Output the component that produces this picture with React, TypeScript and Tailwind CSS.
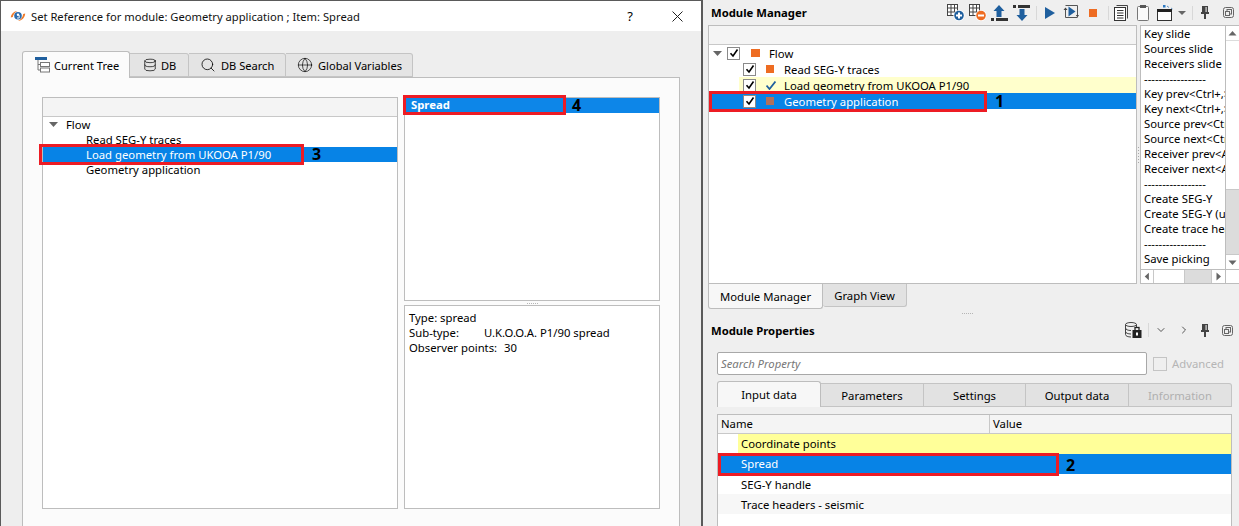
import React from 'react';
import { Database, Search, Globe, ChevronDown, ChevronRight } from 'lucide-react';

const Check = ({ className = '' }: { className?: string }) => (
  <svg width="10" height="10" viewBox="0 0 10 10" className={className}>
    <path d="M1.5 5.2 L4 8 L8.5 1.5" fill="none" stroke="#000" strokeWidth="1.6" />
  </svg>
);

const CheckBox = () => (
  <div className="w-[13px] h-[13px] border border-[#8a8a8a] bg-white flex items-center justify-center shrink-0">
    <Check />
  </div>
);

const Caret = () => (
  <svg width="9" height="5" viewBox="0 0 9 5" className="shrink-0">
    <path d="M0 0 H9 L4.5 5 Z" fill="#666" />
  </svg>
);

const Logo = () => (
  <svg width="16" height="12" viewBox="0 0 16 12" className="shrink-0">
    <path d="M0.8 7.5 C1 4 4 1.2 7.5 1 C5 2.2 3.2 4.5 2.8 7 Z" fill="#ee7a2a" />
    <path d="M15.2 3.5 C15 7.5 12 10.8 8 11 C10.8 9.8 12.8 7.2 13.2 4 Z" fill="#ee7a2a" />
    <circle cx="8" cy="5.8" r="3.8" fill="#2b6cae" />
    <circle cx="8" cy="4.8" r="1.2" fill="#fff" />
    <path d="M9.2 5 V8 H7" fill="none" stroke="#fff" strokeWidth="0.9" />
  </svg>
);

const TreeIcon = () => (
  <svg width="16" height="16" viewBox="0 0 16 16" className="shrink-0">
    <rect x="0" y="0" width="12" height="3" fill="#1f5f9e" />
    <path d="M3 3 V13 H5 M3 7.5 H5" fill="none" stroke="#777" />
    <rect x="5.5" y="5.5" width="9" height="4" fill="#fff" stroke="#777" />
    <rect x="5.5" y="11" width="9" height="4" fill="#fff" stroke="#777" />
  </svg>
);

const GridIcon = ({ sign }: { sign: 'plus' | 'minus' }) => (
  <svg width="18" height="17" viewBox="0 0 18 17" className="shrink-0">
    <rect x="0.5" y="0.5" width="10" height="11" fill="#fff" stroke="#444" />
    <path d="M0.5 4 H10.5 M0.5 8 H10.5 M4 0.5 V11.5 M7.5 0.5 V11.5" stroke="#444" />
    <circle cx="12" cy="11.5" r="5.5" fill="#fff" />
    <circle cx="12" cy="11.5" r="4.8" fill={sign === 'plus' ? '#1f5f9e' : '#ee6c22'} />
    <path d={sign === 'plus' ? 'M9 11.5 H15 M12 8.5 V14.5' : 'M9 11.5 H15'} stroke="#fff" strokeWidth="2" />
  </svg>
);

const UpIcon = () => (
  <svg width="17" height="16" viewBox="0 0 17 16" className="shrink-0">
    <path d="M8 0 L13.5 6 H10.5 V12 H5.5 V6 H2.5 Z" fill="#1f5f9e" />
    <rect x="0" y="13" width="3" height="3" fill="#333" />
    <rect x="5" y="13" width="12" height="3" fill="#333" />
  </svg>
);

const DownIcon = () => (
  <svg width="17" height="16" viewBox="0 0 17 16" className="shrink-0">
    <rect x="0" y="0" width="3" height="3" fill="#333" />
    <rect x="5" y="0" width="12" height="3" fill="#333" />
    <path d="M9 16 L14.5 10 H11.5 V4 H6.5 V10 H3.5 Z" fill="#1f5f9e" />
  </svg>
);

const PlayIcon = () => (
  <svg width="10" height="12" viewBox="0 0 10 12" className="shrink-0">
    <path d="M0 0 L10 6 L0 12 Z" fill="#1f5f9e" />
  </svg>
);

const StepIcon = () => (
  <svg width="16" height="15" viewBox="0 0 16 15" className="shrink-0">
    <path d="M2.5 0.5 H14.5 V10 M14.5 12.5 H2.5 V5" fill="none" stroke="#555" />
    <path d="M5.5 1.5 L12.5 6.5 L5.5 11.5 Z" fill="#1f5f9e" />
    <path d="M0.5 5 L2.5 2.5 L4.5 5 Z" fill="#444" />
    <path d="M12.8 10 L14.5 12.5 L16 10 Z" fill="#444" />
  </svg>
);

const StopIcon = () => <div className="w-[8px] h-[8px] bg-[#ee6c22] shrink-0" />;

const DocIcon = () => (
  <svg width="14" height="16" viewBox="0 0 14 16" className="shrink-0">
    <path d="M2.5 0.5 H13.5 V13.5" fill="none" stroke="#444" />
    <rect x="0.5" y="2.5" width="11" height="13" fill="#fff" stroke="#333" />
    <path d="M3 5.5 H9.5 M3 8 H9.5 M3 10.5 H9.5 M3 13 H9.5" stroke="#333" />
  </svg>
);

const ClipIcon = () => (
  <svg width="12" height="16" viewBox="0 0 12 16" className="shrink-0">
    <rect x="0.5" y="1.5" width="11" height="14" rx="1" fill="#fafafa" stroke="#777" />
    <rect x="3" y="0" width="6" height="3" fill="#555" />
  </svg>
);

const WindowIcon = () => (
  <svg width="16" height="16" viewBox="0 0 16 16" className="shrink-0">
    <rect x="6" y="0" width="2.5" height="2.5" fill="#2b78c2" />
    <path d="M10 1 L12 2.5 M14 3 L15.5 4" stroke="#5b8fc2" />
    <rect x="0.5" y="4.5" width="14" height="11" fill="#fff" stroke="#333" />
    <rect x="0" y="4" width="15" height="3" fill="#222" />
  </svg>
);

const PinIcon = () => (
  <svg width="8" height="13" viewBox="0 0 8 13" className="shrink-0">
    <path d="M1 0 H7 V6 H8 V8 H5 V13 H3 V8 H0 V6 H1 Z" fill="#444" />
    <rect x="4.5" y="1" width="1.2" height="5" fill="#ddd" />
  </svg>
);

const RestoreIcon = () => (
  <svg width="11" height="11" viewBox="0 0 11 11" className="shrink-0">
    <rect x="0.5" y="0.5" width="10" height="10" rx="2" fill="none" stroke="#666" />
    <rect x="4" y="2.5" width="4.5" height="4.5" fill="none" stroke="#666" />
    <rect x="2.5" y="4.5" width="4" height="4" fill="#eee" stroke="#666" />
  </svg>
);

const DbLockIcon = () => (
  <svg width="17" height="16" viewBox="0 0 17 16" className="shrink-0">
    <ellipse cx="6" cy="2.5" rx="5.5" ry="2" fill="none" stroke="#444" />
    <path d="M0.5 2.5 V12.5 C0.5 14 3 15 6 15 M0.5 6 C0.5 7.5 3 8.5 6 8.5 M0.5 9.5 C0.5 11 3 12 6 12 M11.5 2.5 V6" fill="none" stroke="#444" />
    <rect x="7.5" y="8" width="9" height="8" fill="#222" />
    <rect x="10" y="5.5" width="4" height="4" fill="none" stroke="#222" strokeWidth="1.3" />
    <rect x="11" y="10.5" width="2" height="3" fill="#fff" />
  </svg>
);

const Sep = () => <div className="w-px h-[14px] bg-[#d8d8d8] shrink-0" />;

// vertical or horizontal grip dots of a splitter
const GripH = () => (
  <div className="flex gap-px">
    {[0, 1, 2, 3, 4, 5].map((i) => (
      <span key={i} className="w-px h-px bg-[#b5b5b5]" />
    ))}
  </div>
);
const GripV = () => (
  <div className="flex flex-col gap-[2px]">
    {[0, 1, 2, 3, 4, 5].map((i) => (
      <span key={i} className="w-px h-px bg-[#a8a8a8]" />
    ))}
  </div>
);

const ScrollArrow = ({ d }: { d: string }) => (
  <svg width="13" height="13" viewBox="0 0 13 13">
    <path d={d} fill="#666" />
  </svg>
);

const menuLines = [
  'Key slide', 'Sources slide', 'Receivers slide', '-----------------',
  'Key prev<Ctrl+,>', 'Key next<Ctrl+,>', 'Source prev<Ctrl+Up>', 'Source next<Ctrl+Down>',
  'Receiver prev<Alt+Left>', 'Receiver next<Alt+Right>', '-----------------',
  'Create SEG-Y', 'Create SEG-Y (using headers)', 'Create trace headers', '-----------------', 'Save picking',
];

export default function App() {
  return (
    <div className="relative w-[1239px] h-[526px] overflow-hidden flex bg-[#efefef] text-[11.3px] leading-[15px] text-black font-['Noto_Sans',sans-serif]">
      {/* Dialog */}
      <div className="w-[703px] h-full shrink-0 flex flex-col border-t border-l border-r-2 border-[#5a5a5a] bg-[#eeeeee]">
        <div className="h-[30px] shrink-0 bg-white flex items-center pl-[9px]">
          <Logo />
          <span className="ml-[5px] text-[11.2px] text-[#111]">Set Reference for module: Geometry application ; Item: Spread</span>
          <span className="ml-auto text-[13px]">?</span>
          <svg width="11" height="11" viewBox="0 0 11 11" className="ml-[39px] mr-[18px]">
            <path d="M0.5 0.5 L10.5 10.5 M10.5 0.5 L0.5 10.5" stroke="#222" />
          </svg>
        </div>

        <div className="flex-1 pt-[20px] pl-[21px] min-h-0">
          <div className="flex h-[26px] items-end text-[11.1px]">
            <div className="w-[108px] h-[27px] -mb-px z-10 flex items-center gap-[3px] pl-[12px] bg-[#fbfbfb] border border-b-0 border-[#bdbdbd] rounded-t-[3px]">
              <TreeIcon />
              <span>Current Tree</span>
            </div>
            <div className="w-[59px] h-[24px] flex items-center gap-[4px] pl-[13px] bg-[#e4e4e4] border border-l-0 border-[#c4c4c4] rounded-tr-[3px]">
              <Database size={14} strokeWidth={1.2} />
              <span>DB</span>
            </div>
            <div className="w-[97px] h-[24px] flex items-center gap-[5px] pl-[11px] bg-[#e4e4e4] border border-l-0 border-[#c4c4c4] rounded-tr-[3px]">
              <Search size={16} strokeWidth={1.2} />
              <span>DB Search</span>
            </div>
            <div className="w-[127px] h-[24px] flex items-center gap-[5px] pl-[11px] bg-[#e4e4e4] border border-l-0 border-[#c4c4c4] rounded-tr-[3px]">
              <Globe size={16} strokeWidth={1} />
              <span>Global Variables</span>
            </div>
          </div>

          <div className="w-[658px] h-[460px] border border-[#bdbdbd] bg-[#fbfbfb] pt-[19px] pl-[19px] flex gap-[6px]">
            <div className="relative w-[356px] h-[412px] border border-[#bdbdbd] bg-white shrink-0">
              <div className="h-[19px] bg-[#f4f4f4] border-b border-[#c8c8c8]" />
              <div className="flex items-center h-[15px] pl-[6px] gap-[8px]">
                <Caret />
                <span>Flow</span>
              </div>
              <div className="h-[15px] pl-[43px]">Read SEG-Y traces</div>
              <div className="h-[15px] pl-[43px] bg-[#0783e6] text-white">Load geometry from UKOOA P1/90</div>
              <div className="h-[15px] pl-[43px]">Geometry application</div>
              {/* annotation 3 */}
              <div className="absolute left-[-4px] top-[46px] w-[265px] h-[21px] border-[3px] border-[#ed1c24]" />
              <div className="absolute left-[269px] top-[47px] text-[16px] leading-[18px] font-bold">3</div>
            </div>

            <div className="w-[256px] h-[412px] shrink-0 flex flex-col">
              <div className="relative h-[204px] border border-[#bdbdbd] bg-white shrink-0">
                <div className="h-[15px] pl-[6px] leading-[14px] bg-[#0d86e8] text-white font-bold">Spread</div>
                <div className="absolute left-[-2px] top-[-3px] w-[163px] h-[20px] border-[3px] border-[#ed1c24]" />
                <div className="absolute left-[167px] top-[-2px] text-[16px] leading-[18px] font-bold">4</div>
              </div>
              <div className="h-[4px] flex items-center justify-center shrink-0">
                <GripH />
              </div>
              <div className="flex-1 border border-[#bdbdbd] bg-white pl-[4px] pt-[4px]">
                <div>Type: spread</div>
                <div className="flex">
                  <span className="w-[75px]">Sub-type:</span>
                  <span>U.K.O.O.A. P1/90 spread</span>
                </div>
                <div className="flex">
                  <span className="w-[95px]">Observer points:</span>
                  <span>30</span>
                </div>
              </div>
            </div>
          </div>
        </div>
      </div>

      {/* Right column */}
      <div className="flex-1 min-w-0 flex flex-col">
        <div className="h-[25px] shrink-0 flex items-center pl-[8px] pr-[5px]">
          <span className="font-bold whitespace-nowrap">Module Manager</span>
          <div className="ml-auto flex items-center">
            <GridIcon sign="plus" />
            <div className="ml-[4px]"><GridIcon sign="minus" /></div>
            <div className="ml-[4px]"><UpIcon /></div>
            <div className="ml-[5px]"><DownIcon /></div>
            <div className="ml-[6px]"><Sep /></div>
            <div className="ml-[8px]"><PlayIcon /></div>
            <div className="ml-[8px]"><StepIcon /></div>
            <div className="ml-[10px]"><StopIcon /></div>
            <div className="ml-[11px]"><Sep /></div>
            <div className="ml-[5px]"><DocIcon /></div>
            <div className="ml-[9px]"><ClipIcon /></div>
            <div className="ml-[8px]"><WindowIcon /></div>
            <div className="ml-[5px]"><svg width="8" height="4" viewBox="0 0 8 4"><path d="M0 0 H8 L4 4 Z" fill="#666" /></svg></div>
            <div className="ml-[6px]"><Sep /></div>
            <div className="ml-[8px]"><PinIcon /></div>
            <div className="ml-[14px]"><RestoreIcon /></div>
          </div>
        </div>

        <div className="flex h-[259px] shrink-0 pl-[5px]">
          <div className="relative w-[429px] border border-[#bdbdbd] bg-white shrink-0">
            <div className="h-[19px] bg-[#f4f4f4] border-b border-[#c8c8c8]" />
            <div className="flex items-center h-[16px] pl-[4px]">
              <Caret />
              <div className="ml-[5px]"><CheckBox /></div>
              <div className="ml-[11px] w-[9px] h-[8px] bg-[#ee6c22]" />
              <span className="ml-[9px]">Flow</span>
            </div>
            <div className="flex items-center h-[16px] pl-[34px]">
              <CheckBox />
              <div className="ml-[10px] w-[8px] h-[8px] bg-[#ee6c22]" />
              <span className="ml-[10px]">Read SEG-Y traces</span>
            </div>
            <div className="flex items-center h-[16px] pl-[34px] bg-[linear-gradient(to_right,#fff_0,#fff_30px,#ffffcc_30px)]">
              <CheckBox />
              <svg width="10" height="9" viewBox="0 0 10 9" className="ml-[10px]">
                <path d="M0.5 4.5 L3.5 8 L9.5 0.5" fill="none" stroke="#1f5f9e" strokeWidth="1.8" />
              </svg>
              <span className="ml-[8px]">Load geometry from UKOOA P1/90</span>
            </div>
            <div className="flex items-center h-[16px] pl-[34px] bg-[#0783e6] text-white">
              <CheckBox />
              <div className="ml-[10px] w-[8px] h-[8px] bg-[#b0705c]" />
              <span className="ml-[10px]">Geometry application</span>
            </div>
            {/* annotation 1 */}
            <div className="absolute left-0 top-[65px] w-[278px] h-[21px] border-[3px] border-[#ed1c24]" />
            <div className="absolute left-[286px] top-[66px] text-[16px] leading-[18px] font-bold">1</div>
          </div>

          <div className="w-[3px] flex items-center justify-center shrink-0">
            <GripV />
          </div>

          <div className="relative flex-1 border-y border-l border-[#bdbdbd] bg-white min-w-0 flex flex-col overflow-hidden">
            <div className="flex flex-1 min-h-0">
              <div className="w-[84px] overflow-hidden pl-[3px] whitespace-nowrap shrink-0">
                {menuLines.map((line, i) => (
                  <div key={i} className="h-[15px]">{line}</div>
                ))}
              </div>
              <div className="flex-1 border-l border-[#bdbdbd] flex flex-col">
                <div className="h-[14px] flex items-center justify-center">
                  <ScrollArrow d="M6.5 4 L10.5 8.5 H2.5 Z" />
                </div>
                <div className="flex-1 border-t border-[#dcdcdc]" />
                <div className="h-[66px] bg-[#dcdcdc] border-y border-[#c8c8c8]" />
                <div className="h-[14px] flex items-center justify-center">
                  <ScrollArrow d="M6.5 9 L10.5 4.5 H2.5 Z" />
                </div>
              </div>
            </div>
            <div className="h-[14px] shrink-0 border-t border-[#bdbdbd] flex">
              <div className="w-[13px] border-r border-[#c8c8c8] flex items-center justify-center">
                <ScrollArrow d="M4 6.5 L8.5 2.5 V10.5 Z" />
              </div>
              <div className="w-[30px]" />
              <div className="w-[28px] bg-[#dcdcdc] border-x border-[#c8c8c8]" />
              <div className="w-[13px] flex items-center justify-center">
                <ScrollArrow d="M9 6.5 L4.5 2.5 V10.5 Z" />
              </div>
              <div className="flex-1 border-l border-[#bdbdbd]" />
            </div>
          </div>
        </div>

        <div className="flex pl-[5px] h-[25px] shrink-0">
          <div className="w-[115px] h-[26px] -mt-px pt-[1px] bg-[#f7f7f7] border border-t-0 border-[#bdbdbd] rounded-b-[3px] flex items-center justify-center">
            Module Manager
          </div>
          <div className="w-[84px] h-[24px] -mt-px pt-px bg-[#e2e2e2] border border-t-0 border-l-0 border-[#c4c4c4] rounded-b-[3px] flex items-center justify-center">
            Graph View
          </div>
        </div>

        <div className="h-[8px] shrink-0 flex items-center justify-center pr-[8px]">
          <GripH />
        </div>

        <div className="h-[26px] shrink-0 flex items-center pl-[8px]">
          <span className="font-bold">Module Properties</span>
          <div className="ml-auto flex items-center">
            <DbLockIcon />
            <div className="ml-[6px]"><Sep /></div>
            <ChevronDown size={12} strokeWidth={1.5} className="ml-[6px] text-[#222]" />
            <ChevronRight size={12} strokeWidth={1.5} className="ml-[11px] text-[#222]" />
            <div className="ml-[11px]"><PinIcon /></div>
            <div className="ml-[13px] mr-[6px]"><RestoreIcon /></div>
          </div>
        </div>

        <div className="pl-[14px] pr-[8px] mt-[9px] flex items-center shrink-0">
          <div className="w-[430px] h-[23px] border border-[#a8a8a8] rounded-[2px] bg-white pl-[3px] flex items-center italic text-[#777]">
            Search Property
          </div>
          <div className="ml-[6px] w-[14px] h-[14px] border border-[#c4c4c4] bg-[#efefef]" />
          <span className="ml-[5px] text-[#b5b5b5]">Advanced</span>
        </div>

        <div className="pl-[14px] mt-[6px] flex items-end h-[26px] shrink-0">
          <div className="w-[104px] h-[26px] bg-[#f7f7f7] border border-b-0 border-[#bdbdbd] rounded-t-[3px] flex items-center justify-center">
            Input data
          </div>
          <div className="w-[103px] h-[24px] bg-[#e2e2e2] border border-l-0 border-[#c4c4c4] flex items-center justify-center">
            Parameters
          </div>
          <div className="w-[102px] h-[24px] bg-[#e2e2e2] border border-l-0 border-[#c4c4c4] flex items-center justify-center">
            Settings
          </div>
          <div className="w-[103px] h-[24px] bg-[#e2e2e2] border border-l-0 border-[#c4c4c4] flex items-center justify-center">
            Output data
          </div>
          <div className="w-[103px] h-[24px] bg-[#e2e2e2] border border-l-0 border-[#c4c4c4] rounded-tr-[3px] flex items-center justify-center text-[#b0b0b0]">
            Information
          </div>
        </div>

        <div className="ml-[14px] mt-[7px] w-[515px] h-[130px] shrink-0 relative border border-[#bdbdbd] bg-white">
          <div className="h-[19px] flex bg-[#f4f4f4] border-b border-[#c8c8c8]">
            <div className="w-[272px] pl-[3px] pb-px border-r border-[#c8c8c8] flex items-center">Name</div>
            <div className="pl-[3px] pb-px flex items-center">Value</div>
          </div>
          <div className="h-[20px] pl-[20px]">
            <div className="h-full pl-[3px] pb-px bg-[#ffff99] flex items-center">Coordinate points</div>
          </div>
          <div className="h-[20px] pl-[23px] pb-px bg-[#0783e6] text-white flex items-center">Spread</div>
          <div className="h-[20px] pl-[23px] flex items-center">SEG-Y handle</div>
          <div className="h-[20px] pl-[23px] bg-[#f7f7f7] flex items-center">Trace headers - seismic</div>
          {/* annotation 2 */}
          <div className="absolute left-0 top-[38px] w-[341px] h-[23px] border-[3px] border-[#ed1c24]" />
          <div className="absolute left-[348px] top-[41px] text-[16px] leading-[18px] font-bold">2</div>
        </div>
      </div>
    </div>
  );
}
